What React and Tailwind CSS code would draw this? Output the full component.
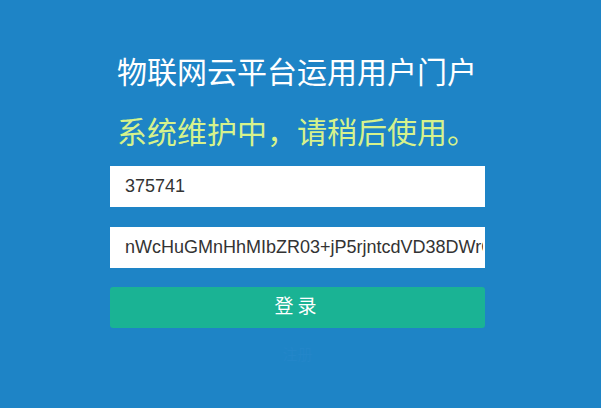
import React from 'react';

export default function App() {
  return (
    <div className="w-[601px] h-[408px] bg-[#1e84c6] overflow-hidden" style={{ fontFamily: '"Liberation Sans", "Noto Sans CJK SC", sans-serif' }}>
      <div className="w-[375px] ml-[110px] pt-[53px]">
        <h1 className="pl-[7px] text-[30px] leading-[40px] text-white whitespace-nowrap">物联网云平台运用用户门户</h1>
        <p className="pl-[7px] mt-[20px] text-[30px] leading-[40px] text-[#d6f28c] whitespace-nowrap">系统维护中，请稍后使用。</p>
        <div className="mt-[13px] flex flex-col gap-[20px]">
          <input
            readOnly
            value="375741"
            className="h-[41px] w-full bg-white pl-[15px] pr-[2px] text-[18px] text-[#333] outline-none"
          />
          <input
            readOnly
            value="nWcHuGMnHhMIbZR03+jP5rjntcdVD38DWrQ"
            className="h-[41px] w-full bg-white pl-[15px] pr-[2px] text-[18px] text-[#333] outline-none"
          />
          <button className="-mt-[1px] h-[41px] w-full rounded-[3px] bg-[#1ab394] text-[19px] tracking-[4px] text-white">
            登录
          </button>
        </div>
        <div className="mt-[16px] text-center text-[15px] text-[#2386c9]">注册</div>
      </div>
    </div>
  );
}
